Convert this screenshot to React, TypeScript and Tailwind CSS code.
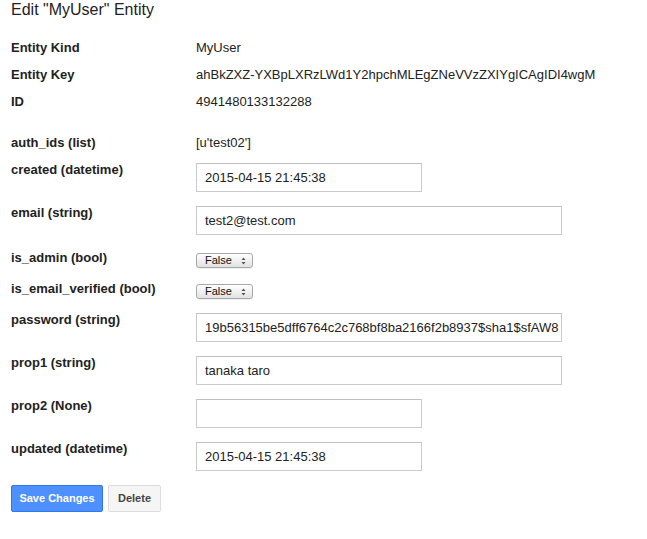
import React from "react";

const font = { fontFamily: '"Liberation Sans", Arial, Helvetica, sans-serif' };

function Label({ children }: { children: React.ReactNode }) {
  return <div className="w-[185px] shrink-0 font-bold text-[13px] leading-[16px] text-[#222]">{children}</div>;
}

function TextInput({ value, wide }: { value: string; wide?: boolean }) {
  return (
    <input
      readOnly
      defaultValue={value}
      className={`${wide ? "w-[366px]" : "w-[226px]"} mt-[1px] h-[29px] border border-[#cacaca] border-t-[#c0c0c0] bg-white pl-[8px] pr-0 text-[13px] text-[#222] outline-none`}
    />
  );
}

function FakeSelect() {
  return (
    <div className="mt-[3px] w-[57px] h-[15px] flex items-center justify-between rounded-[3px] border border-[#a8a8a8] bg-linear-to-b from-[#ffffff] to-[#e2e2e2] pl-[8px] pr-[6px] shadow-[0_1px_0_rgba(0,0,0,0.06)]">
      <span className="text-[11px] leading-[13px] text-[#111]">False</span>
      <svg width="5" height="8" viewBox="0 0 5 8">
        <path d="M2.5 0.5 L4.5 3 L0.5 3 Z" fill="#555" />
        <path d="M2.5 7.5 L4.5 5 L0.5 5 Z" fill="#555" />
      </svg>
    </div>
  );
}

function Row({ label, h, children }: { label: string; h: string; children: React.ReactNode }) {
  return (
    <div className={`flex items-start ${h}`}>
      <Label>{label}</Label>
      {children}
    </div>
  );
}

export default function App() {
  return (
    <div className="w-[647px] h-[539px] bg-white pl-[11px] text-[#222]" style={font}>
      <h1 className="text-[16px] leading-[19px] font-normal text-[#222]">Edit "MyUser" Entity</h1>

      <div className="mt-[21px]">
        <div className="flex h-[27px] items-start">
          <Label>Entity Kind</Label>
          <div className="text-[13px] leading-[16px]">MyUser</div>
        </div>
        <div className="flex h-[27px] items-start">
          <Label>Entity Key</Label>
          <div className="text-[13px] leading-[16px] whitespace-nowrap">ahBkZXZ-YXBpLXRzLWd1Y2hpchMLEgZNeVVzZXIYgICAgIDI4wgM</div>
        </div>
        <div className="flex h-[27px] items-start">
          <Label>ID</Label>
          <div className="text-[13px] leading-[16px]">4941480133132288</div>
        </div>
      </div>

      <div className="mt-[14px]">
        <Row label="auth_ids (list)" h="h-[27px]">
          <div className="text-[13px] leading-[16px]">[u'test02']</div>
        </Row>
        <Row label="created (datetime)" h="h-[43px]">
          <TextInput value="2015-04-15 21:45:38" />
        </Row>
        <Row label="email (string)" h="h-[45px]">
          <TextInput value="test2@test.com" wide />
        </Row>
        <Row label="is_admin (bool)" h="h-[31px]">
          <FakeSelect />
        </Row>
        <Row label="is_email_verified (bool)" h="h-[31px]">
          <FakeSelect />
        </Row>
        <Row label="password (string)" h="h-[43px]">
          <TextInput value="19b56315be5dff6764c2c768bf8ba2166f2b8937$sha1$sfAW8" wide />
        </Row>
        <Row label="prop1 (string)" h="h-[43px]">
          <TextInput value="tanaka taro" wide />
        </Row>
        <Row label="prop2 (None)" h="h-[43px]">
          <TextInput value="" />
        </Row>
        <Row label="updated (datetime)" h="h-[43px]">
          <TextInput value="2015-04-15 21:45:38" />
        </Row>
      </div>

      <div className="mt-[1px] flex gap-[5px]">
        <button className="w-[92px] h-[27px] rounded-[2px] border border-[#3079ed] bg-[#4d90fe] text-[11px] font-bold text-white">
          Save Changes
        </button>
        <button className="w-[53px] h-[27px] rounded-[2px] border border-[#dcdcdc] bg-[#f5f5f5] text-[11px] font-bold text-[#444]">
          Delete
        </button>
      </div>
    </div>
  );
}
